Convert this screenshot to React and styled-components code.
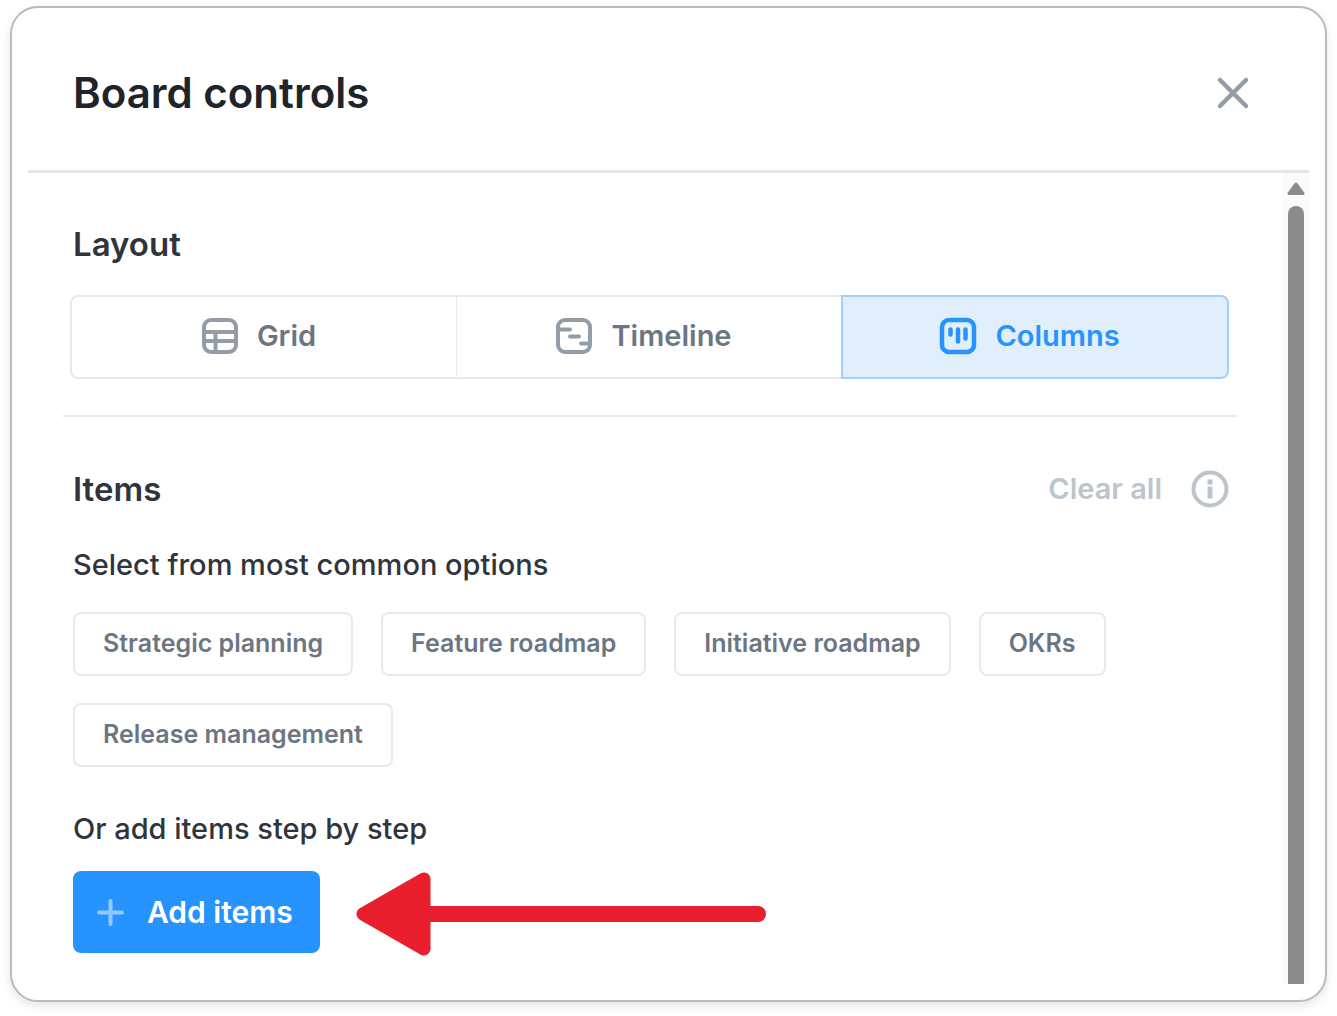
import React, { useState } from "react";
import styled, { createGlobalStyle } from "styled-components";

const GlobalStyle = createGlobalStyle`
  *, *::before, *::after { box-sizing: border-box; }
  body {
    margin: 0;
    background: #fff;
    font-family: Inter, "Open Sans", sans-serif;
    color: #2f353b;
  }
  button { font-family: inherit; margin: 0; cursor: pointer; }
  h1, h2, p { margin: 0; }
`;

const Page = styled.div`
  min-height: 100vh;
  display: flex;
  padding: 6px 10px 14px;
`;

const Dialog = styled.section`
  flex: 1;
  display: flex;
  flex-direction: column;
  padding: 0 16px 16px;
  border: 2px solid #bbbbbb;
  border-radius: 28px;
  background: #fff;
  box-shadow: 0 4px 10px rgba(0, 0, 0, 0.1);
`;

const Header = styled.header`
  display: flex;
  align-items: center;
  justify-content: space-between;
  height: 165px;
  padding: 8px 58px 0 45px;
  border-bottom: 3px solid #e1e6ea;
`;

const Title = styled.h1`
  font-size: 42px;
  line-height: 56px;
  font-weight: 600;
  color: #1f242a;
`;

const IconButton = styled.button`
  display: flex;
  padding: 0;
  border: 0;
  background: none;
  color: ${(p) => p.$color};
`;

const Scroller = styled.div`
  flex: 1;
  display: flex;
`;

const Body = styled.div`
  flex: 1;
  display: flex;
  flex-direction: column;
  padding: 49px 46px 0 35px;
`;

const Section = styled.section`
  display: flex;
  flex-direction: column;
  padding: 0 8px 0 10px;
`;

const SectionTitle = styled.h2`
  font-size: 33px;
  line-height: 44px;
  font-weight: 600;
  color: #2f353b;
`;

const Segments = styled.div`
  display: flex;
  height: 84px;
  margin: 29px 0 36px -3px;
`;

const Segment = styled.button`
  flex: 1;
  display: flex;
  align-items: center;
  justify-content: center;
  gap: 18px;
  padding: 0 11px 2px 0;
  border: 2px solid ${(p) => (p.$active ? "#a3cffa" : "#e6eaed")};
  border-left-width: ${(p) => (p.$active ? "2px" : "1px")};
  border-right-width: ${(p) => (p.$active ? "2px" : "0")};
  background: ${(p) => (p.$active ? "#e1effd" : "#fff")};
  color: ${(p) => (p.$active ? "#2693ff" : "#6c7681")};
  font-size: 29px;
  line-height: 40px;
  font-weight: 600;
  &:first-child { border-left-width: 2px; border-radius: 8px 0 0 8px; }
  &:last-child { border-right-width: 2px; border-radius: 0 8px 8px 0; }
  svg { color: ${(p) => (p.$active ? "#2693ff" : "#929da8")}; }
`;

const Divider = styled.hr`
  width: 100%;
  height: 2px;
  margin: 0;
  border: 0;
  background: #e6e9ec;
`;

const ItemsHead = styled.div`
  display: flex;
  align-items: center;
  justify-content: space-between;
  margin-top: 50px;
`;

const Actions = styled.div`
  display: flex;
  align-items: center;
  gap: 29px;
`;

const TextButton = styled.button`
  padding: 0;
  border: 0;
  background: none;
  font-size: 29px;
  line-height: 40px;
  font-weight: 600;
  color: #bcc5cd;
`;

const Lead = styled.p`
  font-size: 29px;
  line-height: 40px;
  font-weight: 500;
  color: #2f353b;
  margin-top: ${(p) => p.$top};
`;

const Chips = styled.div`
  display: flex;
  flex-wrap: wrap;
  gap: 27px 28px;
  margin-top: 27px;
`;

const Chip = styled.button`
  height: 64px;
  padding: 0 28px 2px;
  border: 2px solid #e6eaed;
  border-radius: 8px;
  background: #fff;
  font-size: 25px;
  line-height: 34px;
  font-weight: 600;
  color: #6c7681;
`;

const AddRow = styled.div`
  display: flex;
  align-items: center;
  gap: 36px;
  margin-top: 19px;
`;

const AddButton = styled.button`
  display: flex;
  align-items: center;
  gap: 22px;
  height: 82px;
  padding: 0 27px 0 23px;
  border: 0;
  border-radius: 8px;
  background: #2693ff;
  font-size: 30px;
  line-height: 40px;
  font-weight: 600;
  color: #fff;
`;

const Track = styled.div`
  width: 26px;
  display: flex;
  flex-direction: column;
  align-items: center;
  gap: 10px;
  padding-top: 8px;
  background: #fbfbfb;
`;

const Thumb = styled.div`
  flex: 1;
  width: 16px;
  border-radius: 8px 8px 0 0;
  background: #8b8b8b;
`;

const GridIcon = () => (
  <svg width="38" height="38" viewBox="0 0 38 38" fill="none" stroke="currentColor" strokeWidth="4" aria-hidden="true">
    <rect x="3" y="3" width="32" height="32" rx="7" />
    <path d="M3 15h32M3 24h32M14.500 15v20" />
  </svg>
);

const TimelineIcon = () => (
  <svg width="38" height="38" viewBox="0 0 38 38" fill="none" stroke="currentColor" strokeWidth="4" strokeLinecap="round" aria-hidden="true">
    <rect x="3" y="3" width="32" height="32" rx="7" />
    <path d="M4 12.500h11M15 19.500h9M26 26.500h8" />
  </svg>
);

const ColumnsIcon = () => (
  <svg width="38" height="38" viewBox="0 0 38 38" fill="none" stroke="currentColor" strokeWidth="4.500" strokeLinecap="round" aria-hidden="true">
    <rect x="3" y="3" width="32" height="32" rx="7" />
    <path d="M11.500 12.500v5M19 12.500v12M26.500 12.500v9" />
  </svg>
);

const CloseIcon = () => (
  <svg width="36" height="36" viewBox="0 0 36 36" fill="none" stroke="currentColor" strokeWidth="4.500" strokeLinecap="round" aria-hidden="true">
    <path d="M5 5l26 26M31 5L5 31" />
  </svg>
);

const InfoIcon = () => (
  <svg width="38" height="38" viewBox="0 0 38 38" fill="none" aria-hidden="true">
    <circle cx="19" cy="19" r="16.500" stroke="currentColor" strokeWidth="4" />
    <path d="M16.500 9.500h5v5h-5zM16.500 16.500h5v12h-5z" fill="currentColor" />
  </svg>
);

const PlusIcon = () => (
  <svg width="29" height="29" viewBox="0 0 29 29" fill="none" stroke="#93c9ff" strokeWidth="4" strokeLinecap="round" aria-hidden="true">
    <path d="M14.500 3v23M3 14.500h23" />
  </svg>
);

const PointerArrow = () => (
  <svg width="411" height="88" viewBox="0 -4 411 88" aria-hidden="true">
    <path d="M72 42H402" stroke="#e91f2e" strokeWidth="16" strokeLinecap="round" />
    <path d="M7 42L68 7V77Z" fill="#e91f2e" stroke="#e91f2e" strokeWidth="13" strokeLinejoin="round" />
  </svg>
);

const ArrowUp = () => (
  <svg width="18" height="15" viewBox="0 0 18 15" fill="#8b8b8b" stroke="#8b8b8b" strokeWidth="3" strokeLinejoin="round" aria-hidden="true">
    <path d="M9 3L2 12.500h14z" />
  </svg>
);

const layouts = [
  { name: "Grid", Icon: GridIcon },
  { name: "Timeline", Icon: TimelineIcon },
  { name: "Columns", Icon: ColumnsIcon },
];

const presets = [
  "Strategic planning",
  "Feature roadmap",
  "Initiative roadmap",
  "OKRs",
  "Release management",
];

export default function App() {
  const [layout, setLayout] = useState("Columns");
  return (
    <Page>
      <GlobalStyle />
      <Dialog role="dialog" aria-labelledby="board-title">
        <Header>
          <Title id="board-title">Board controls</Title>
          <IconButton $color="#929da8" aria-label="Close">
            <CloseIcon />
          </IconButton>
        </Header>
        <Scroller>
          <Body>
            <Section>
              <SectionTitle>Layout</SectionTitle>
              <Segments>
                {layouts.map(({ name, Icon }) => (
                  <Segment
                    key={name}
                    $active={layout === name}
                    aria-pressed={layout === name}
                    onClick={() => setLayout(name)}
                  >
                    <Icon />
                    {name}
                  </Segment>
                ))}
              </Segments>
            </Section>
            <Divider />
            <Section>
              <ItemsHead>
                <SectionTitle>Items</SectionTitle>
                <Actions>
                  <TextButton>Clear all</TextButton>
                  <IconButton $color="#bcc5cd" aria-label="About items">
                    <InfoIcon />
                  </IconButton>
                </Actions>
              </ItemsHead>
              <Lead $top="34px">Select from most common options</Lead>
              <Chips>
                {presets.map((name) => (
                  <Chip key={name}>{name}</Chip>
                ))}
              </Chips>
              <Lead $top="42px">Or add items step by step</Lead>
              <AddRow>
                <AddButton>
                  <PlusIcon />
                  Add items
                </AddButton>
                <PointerArrow />
              </AddRow>
            </Section>
          </Body>
          <Track aria-hidden="true">
            <ArrowUp />
            <Thumb />
          </Track>
        </Scroller>
      </Dialog>
    </Page>
  );
}
